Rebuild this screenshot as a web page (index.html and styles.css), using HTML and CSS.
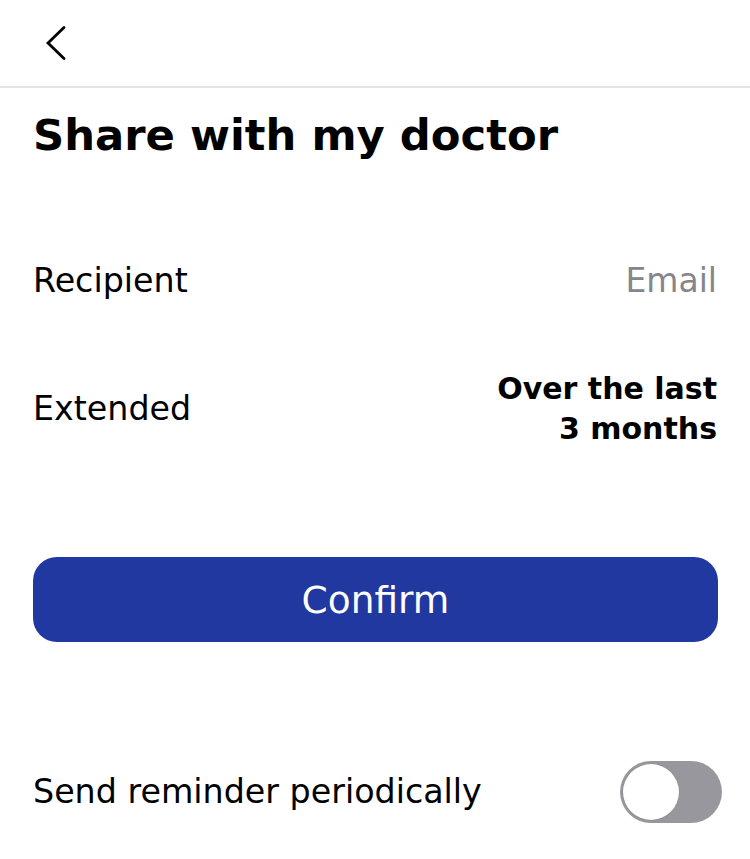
FILE: index.html
```html
<!DOCTYPE html>
<html>
<head>
<meta charset="utf-8">
<link rel="stylesheet" href="styles.css">
</head>
<body>
<div class="screen">
  <header class="nav">
    <button class="back" aria-label="Back">
      <svg width="24" height="36" viewBox="0 0 24 36"><polyline points="21,2.5 5,18 21,33.5" fill="none" stroke="#000" stroke-width="2.8" stroke-linecap="round" stroke-linejoin="miter"/></svg>
    </button>
  </header>
  <main class="content">
    <h1 class="title">Share with my doctor</h1>
    <div class="row row-recipient">
      <span class="label">Recipient</span>
      <span class="value muted">Email</span>
    </div>
    <div class="row row-extended">
      <span class="label">Extended</span>
      <span class="value strong">Over the last<br>3 months</span>
    </div>
    <button class="confirm">Confirm</button>
    <div class="row row-toggle">
      <span class="label">Send reminder periodically</span>
      <span class="toggle"><span class="knob"></span></span>
    </div>
  </main>
</div>
</body>
</html>
```
FILE: styles.css
```css
* { box-sizing: border-box; }
html, body { margin: 0; padding: 0; background: #fff; }
body { font-family: "DejaVu Sans", sans-serif; color: #000; }
.screen { width: 750px; height: 859px; overflow: hidden; }
.nav {
  height: 88px;
  border-bottom: 2px solid #e4e4e8;
  display: flex;
  align-items: flex-start;
  padding: 25px 0 0 43px;
}
.back { background: none; border: 0; padding: 0; width: 24px; height: 36px; }
.back svg { display: block; }
.content { padding: 0 33px 0 33px; display: flex; flex-direction: column; }
.title { margin: 19px 0 0; font-size: 43.3px; font-weight: 700; line-height: 56px; }
.row { display: flex; justify-content: space-between; align-items: center; }
.label { font-size: 33.3px; line-height: 40px; }
.value { font-size: 33px; line-height: 40px; text-align: right; }
.muted { color: #86868a; }
.strong { font-size: 30px; font-weight: 700; line-height: 40px; }
.row-recipient { margin-top: 88px; height: 60px; }
.row-extended { margin-top: 58px; height: 80px; }
.confirm {
  margin-top: 108px;
  height: 85px;
  border: 0;
  border-radius: 24px;
  background: #2138a0;
  color: #fff;
  font-family: inherit;
  font-size: 37.5px;
  width: 685px;
}
.row-toggle { margin-top: 119px; height: 62px; margin-right: -5px; }
.toggle {
  width: 102px; height: 62px; border-radius: 31px; background: #98979d;
  display: flex; align-items: center; padding-left: 3px;
}
.knob { width: 56px; height: 56px; border-radius: 50%; background: #fff; box-shadow: 0 0 0 0.5px #888; }
```
